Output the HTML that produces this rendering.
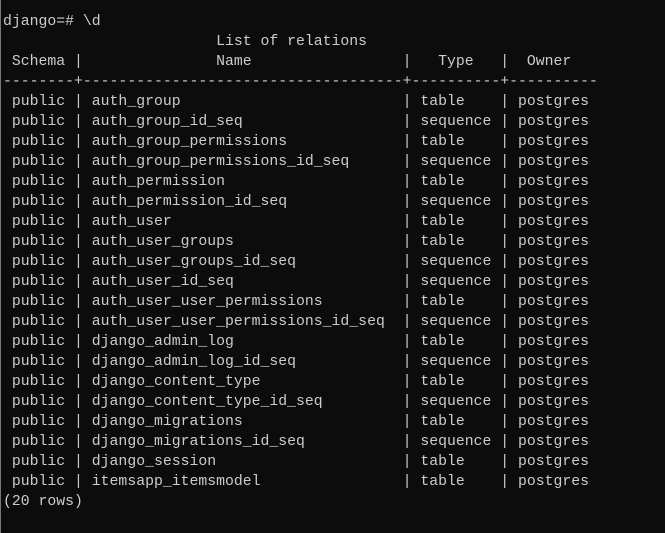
<!DOCTYPE html><html><head><style>
html,body{margin:0;padding:0;background:#0c0c0c;width:665px;height:533px;overflow:hidden}
body{border-left:1px solid #777;box-sizing:border-box}
pre{margin:0;position:absolute;left:3px;top:12px;font-family:"Liberation Mono",monospace;font-size:14.8px;line-height:20px;color:#cccccc}
</style></head><body><pre>django=# \d
                        List of relations
 Schema |               Name                 |   Type   |  Owner
--------+------------------------------------+----------+----------
 public | auth_group                         | table    | postgres
 public | auth_group_id_seq                  | sequence | postgres
 public | auth_group_permissions             | table    | postgres
 public | auth_group_permissions_id_seq      | sequence | postgres
 public | auth_permission                    | table    | postgres
 public | auth_permission_id_seq             | sequence | postgres
 public | auth_user                          | table    | postgres
 public | auth_user_groups                   | table    | postgres
 public | auth_user_groups_id_seq            | sequence | postgres
 public | auth_user_id_seq                   | sequence | postgres
 public | auth_user_user_permissions         | table    | postgres
 public | auth_user_user_permissions_id_seq  | sequence | postgres
 public | django_admin_log                   | table    | postgres
 public | django_admin_log_id_seq            | sequence | postgres
 public | django_content_type                | table    | postgres
 public | django_content_type_id_seq         | sequence | postgres
 public | django_migrations                  | table    | postgres
 public | django_migrations_id_seq           | sequence | postgres
 public | django_session                     | table    | postgres
 public | itemsapp_itemsmodel                | table    | postgres
(20 rows)
</pre></body></html>
